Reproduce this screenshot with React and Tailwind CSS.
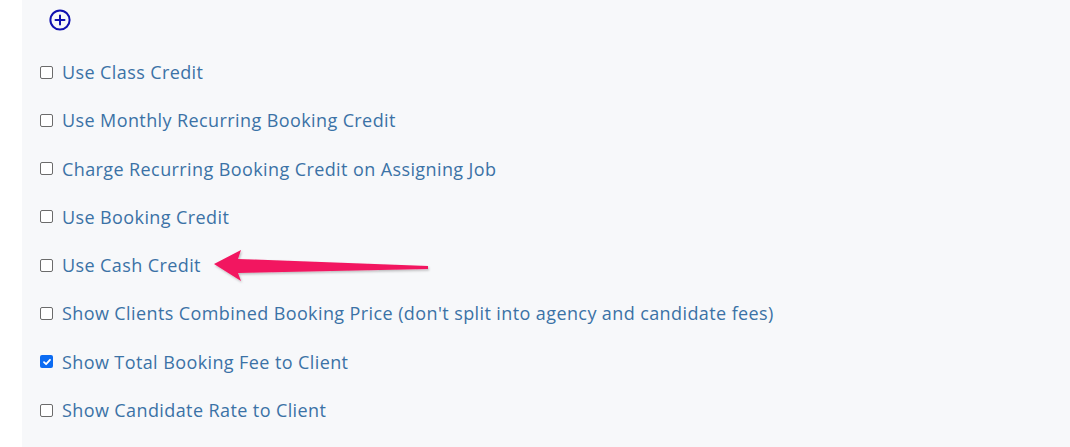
import React from "react";

const rows = [
  { label: "Use Class Credit", checked: false },
  { label: "Use Monthly Recurring Booking Credit", checked: false },
  { label: "Charge Recurring Booking Credit on Assigning Job", checked: false },
  { label: "Use Booking Credit", checked: false },
  { label: "Use Cash Credit", checked: false, arrow: true },
  { label: "Show Clients Combined Booking Price (don't split into agency and candidate fees)", checked: false },
  { label: "Show Total Booking Fee to Client", checked: true },
  { label: "Show Candidate Rate to Client", checked: false },
];

function Box({ checked }) {
  if (checked) {
    return (
      <span className="flex h-[13px] w-[13px] shrink-0 items-center justify-center rounded-[2px] bg-[#0b6bf2]">
        <svg width="10" height="10" viewBox="0 0 10 10">
          <path d="M2 5.2 L4.1 7.2 L8 2.8" fill="none" stroke="white" strokeWidth="1.8" strokeLinecap="round" strokeLinejoin="round" />
        </svg>
      </span>
    );
  }
  return <span className="block h-[13px] w-[13px] shrink-0 rounded-[2px] border border-[#6b6b6b] bg-white" />;
}

export default function App() {
  return (
    <div className="flex h-[447px] w-[1070px] bg-white" style={{ fontFamily: "'Open Sans', sans-serif" }}>
      <div className="w-[22px] shrink-0 bg-white" />
      <div className="flex-1 bg-[#f7f8fa] pl-[18px] pt-[9px]">
        <div className="pl-[9px]">
          <svg width="22" height="22" viewBox="0 0 22 22">
            <circle cx="11" cy="11" r="9.6" fill="none" stroke="#1010b0" strokeWidth="2" />
            <path d="M11 6.5 V15.5 M6.5 11 H15.5" stroke="#1010b0" strokeWidth="2" strokeLinecap="round" />
          </svg>
        </div>
        <div className="mt-[28px] flex flex-col gap-[22.3px]">
          {rows.map((r) => (
            <div key={r.label} className="flex h-[26px] items-center gap-[9px]">
              <Box checked={r.checked} />
              <span className="whitespace-nowrap text-[18px] leading-[26px] tracking-[0.4px] text-[#3b72a6]">{r.label}</span>
              {r.arrow && (
                <svg width="220" height="36" viewBox="0 0 220 36" className="ml-[2px] mt-[2px] shrink-0">
                  <defs>
                    <filter id="sh" x="-10%" y="-40%" width="120%" height="180%">
                      <feDropShadow dx="1" dy="1.5" stdDeviation="1.2" floodColor="#000" floodOpacity="0.25" />
                    </filter>
                  </defs>
                  <path
                    d="M2 16 L29 2 L26 11 L216 18 L216 21 L26 25 L29 33 Z"
                    fill="#f21860"
                    filter="url(#sh)"
                    strokeLinejoin="round"
                  />
                </svg>
              )}
            </div>
          ))}
        </div>
      </div>
    </div>
  );
}
